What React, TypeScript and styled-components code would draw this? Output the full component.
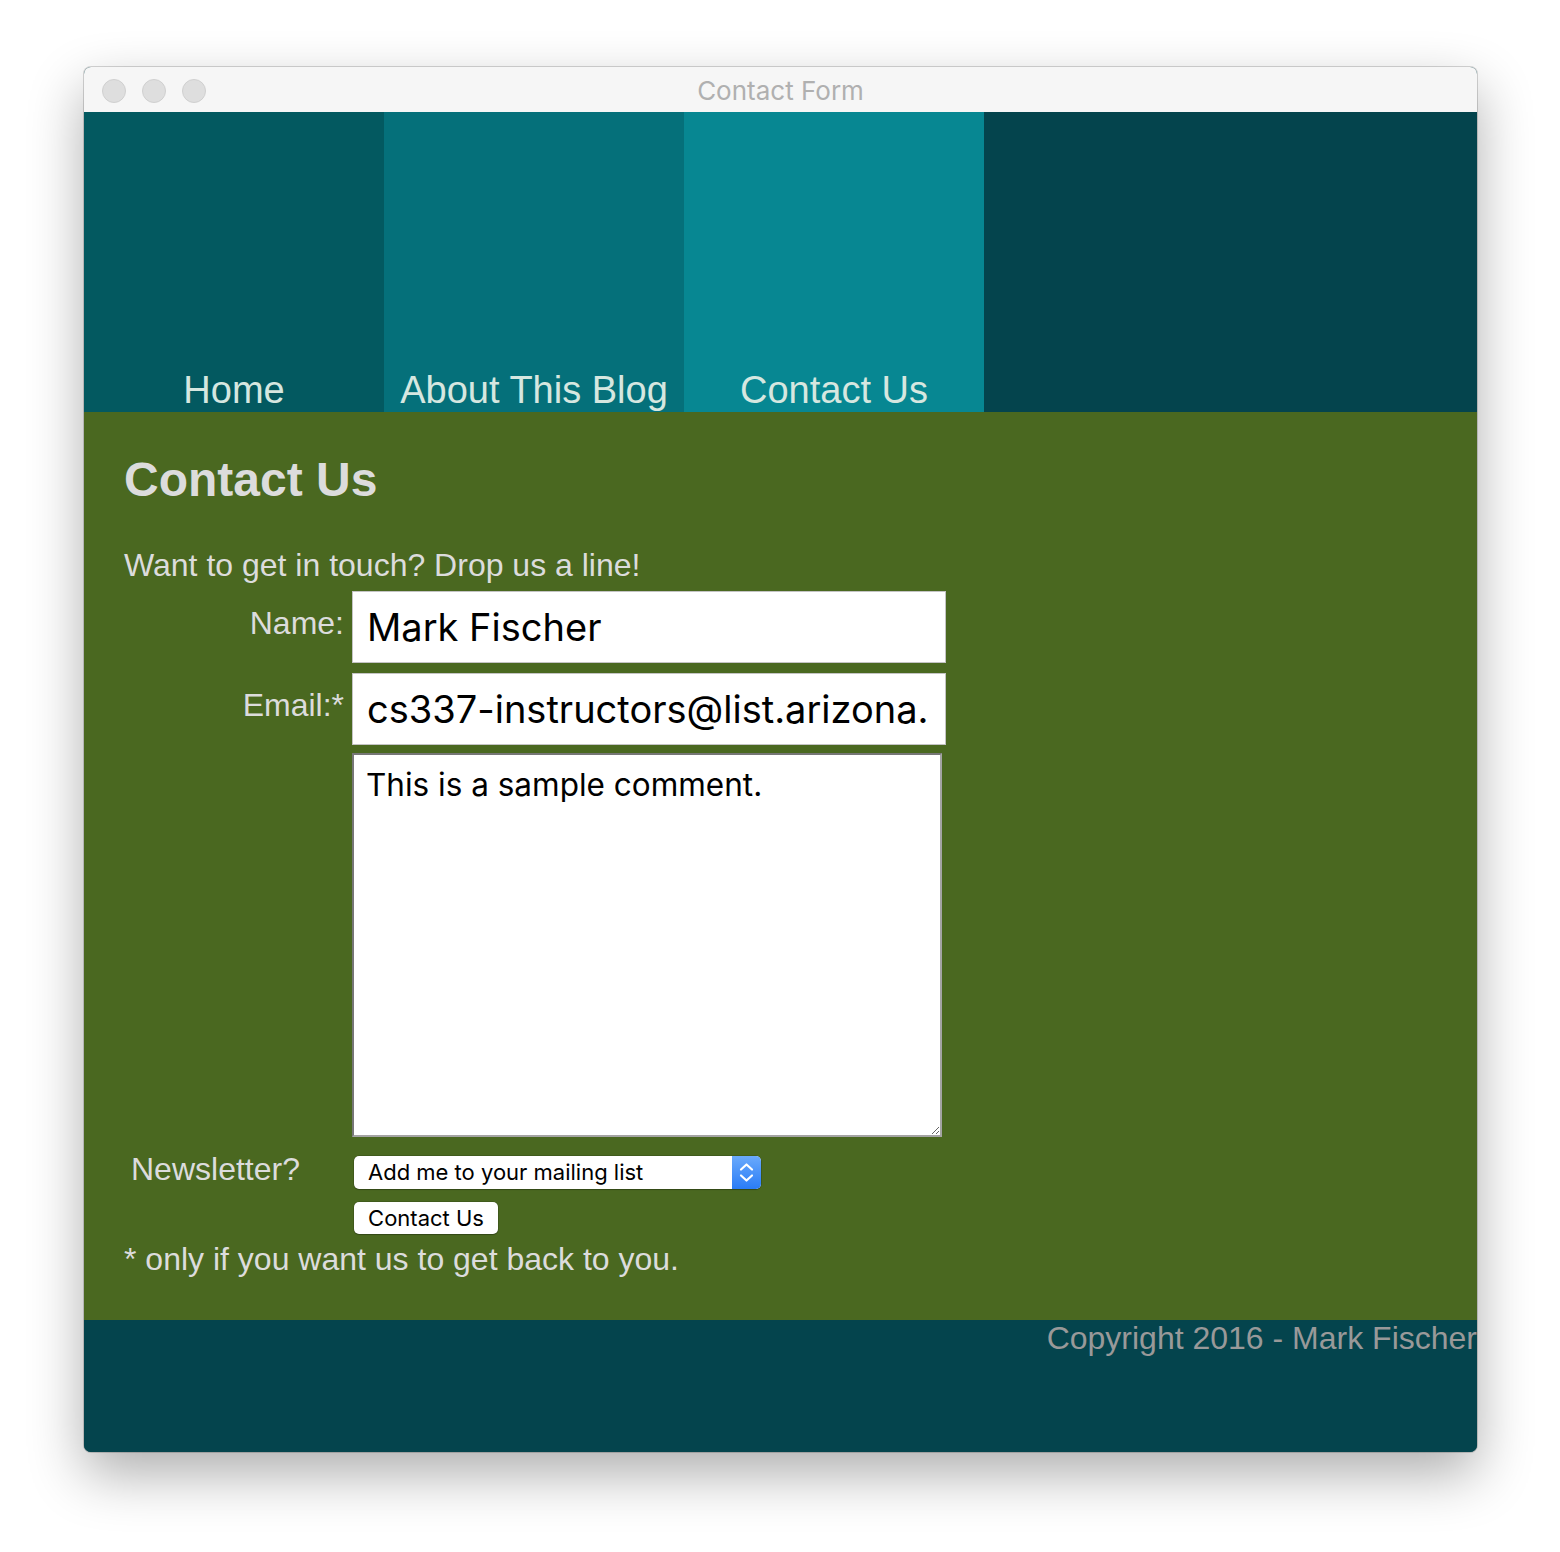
import React from "react";
import styled, { createGlobalStyle } from "styled-components";

const GlobalStyle = createGlobalStyle`
  html, body { margin: 0; padding: 0; background: #ffffff; }
  body { font-family: "Liberation Sans", Arial, sans-serif; }
  * { box-sizing: border-box; }
`;

const Page = styled.div`
  min-height: 1552px;
  padding: 67px 0 0 84px;
`;

const Window = styled.div`
  width: 1393px;
  border-radius: 7px;
  overflow: hidden;
  background: #04444d;
  box-shadow: 0 0 0 1px rgba(0, 0, 0, 0.16), 0 22px 55px rgba(0, 0, 0, 0.32);
  display: flex;
  flex-direction: column;
`;

const TitleBar = styled.div`
  height: 45px;
  padding-top: 2px;
  background: #f6f6f6;
  display: grid;
  grid-template-columns: 1fr auto 1fr;
  align-items: center;
`;

const Lights = styled.div`
  display: flex;
  gap: 16px;
  padding-left: 18px;
  margin-top: 1px;
`;

const Light = styled.span`
  width: 24px;
  height: 24px;
  border-radius: 50%;
  background: #dedede;
  border: 1px solid #d0d0d0;
`;

const Title = styled.div`
  font-family: Inter, "Noto Sans", sans-serif;
  font-size: 26px;
  color: #b0b0b0;
  white-space: nowrap;
`;

const Nav = styled.nav`
  height: 300px;
  display: flex;
  background: #04444d;
`;

const NavItem = styled.a<{ $bg: string }>`
  width: 300px;
  height: 300px;
  background: ${(p) => p.$bg};
  display: flex;
  align-items: flex-end;
  justify-content: center;
  font-size: 38px;
  color: #d6e7e0;
  text-decoration: none;
  white-space: nowrap;
`;

const Main = styled.main`
  height: 908px;
  background: #4a6820;
  padding: 40px 40px 0 40px;
  color: #dcdcdc;
`;

const Heading = styled.h1`
  margin: 0;
  font-size: 48px;
  font-weight: bold;
  line-height: normal;
`;

const Intro = styled.p`
  margin: 40px 0 0;
  font-size: 32px;
  line-height: normal;
`;

const Form = styled.form`
  margin-top: 7px;
  display: flex;
  flex-direction: column;
`;

const Row = styled.div<{ $mt: number; $align?: string }>`
  display: flex;
  align-items: ${(p) => p.$align || "flex-start"};
  margin-top: ${(p) => p.$mt}px;
`;

const Label = styled.label`
  width: 220px;
  margin-right: 8px;
  padding-top: 14px;
  text-align: right;
  font-size: 32px;
  white-space: nowrap;
`;

const SideLabel = styled.label`
  width: 228px;
  padding-left: 7px;
  font-size: 32px;
  white-space: nowrap;
`;

const Spacer = styled.div`
  width: 228px;
  flex: none;
`;

const TextInput = styled.input`
  width: 594px;
  height: 72px;
  border: 1px solid #c4c4c4;
  background: #ffffff;
  padding: 0 17px 0 14px;
  font-family: Inter, "Noto Sans", sans-serif;
  font-size: 38px;
  color: #000;
  outline: none;
`;

const TextArea = styled.textarea`
  width: 590px;
  height: 384px;
  border: 2px solid;
  border-color: #767676 #a4a4a4 #a4a4a4 #767676;
  background: #ffffff;
  padding: 10px 12px;
  font-family: Inter, "Noto Sans", sans-serif;
  font-size: 31.5px;
  color: #000;
  outline: none;
`;

const SelectBox = styled.div`
  display: inline-flex;
  width: 407px;
  height: 33px;
  margin-left: 2px;
  border-radius: 5px;
  background: #ffffff;
  box-shadow: 0 0 0 0.5px rgba(0, 0, 0, 0.25), 0 1px 1px rgba(0, 0, 0, 0.2);
  overflow: hidden;
`;

const Select = styled.select`
  flex: 1;
  appearance: none;
  -webkit-appearance: none;
  border: 0;
  background: transparent;
  padding: 0 0 0 14px;
  font-family: Inter, "Noto Sans", sans-serif;
  font-size: 22px;
  color: #000;
  outline: none;
`;

const Stepper = styled.span`
  width: 29px;
  flex: none;
  background: linear-gradient(#6aaafc, #2a7cf6);
  display: flex;
  align-items: center;
  justify-content: center;
`;

const Button = styled.button`
  width: 144px;
  height: 32px;
  margin-left: 2px;
  border: 0;
  border-radius: 5px;
  background: #ffffff;
  box-shadow: 0 0 0 0.5px rgba(0, 0, 0, 0.25), 0 1px 1px rgba(0, 0, 0, 0.2);
  font-family: Inter, "Noto Sans", sans-serif;
  font-size: 22px;
  color: #000;
  padding: 0;
`;

const Footnote = styled.p`
  margin: 7px 0 0;
  font-size: 32px;
  line-height: normal;
`;

const Footer = styled.footer`
  height: 132px;
  background: #04444d;
  color: #999999;
  font-size: 32px;
  text-align: right;
  white-space: nowrap;
  overflow: hidden;
`;

export default function App() {
  return (
    <Page>
      <GlobalStyle />
      <Window>
        <TitleBar>
          <Lights>
            <Light />
            <Light />
            <Light />
          </Lights>
          <Title>Contact Form</Title>
          <div />
        </TitleBar>
        <Nav>
          <NavItem $bg="#035960" href="#">Home</NavItem>
          <NavItem $bg="#05707a" href="#">About This Blog</NavItem>
          <NavItem $bg="#078792" href="#">Contact Us</NavItem>
        </Nav>
        <Main>
          <Heading>Contact Us</Heading>
          <Intro>Want to get in touch? Drop us a line!</Intro>
          <Form onSubmit={(e) => e.preventDefault()}>
            <Row $mt={0}>
              <Label>Name:</Label>
              <TextInput defaultValue="Mark Fischer" />
            </Row>
            <Row $mt={10}>
              <Label>Email:*</Label>
              <TextInput defaultValue="cs337-instructors@list.arizona.edu" />
            </Row>
            <Row $mt={8}>
              <Spacer />
              <TextArea defaultValue="This is a sample comment." />
            </Row>
            <Row $mt={14} $align="baseline">
              <SideLabel>Newsletter?</SideLabel>
              <SelectBox>
                <Select defaultValue="yes">
                  <option value="yes">Add me to your mailing list</option>
                  <option value="no">No thanks</option>
                </Select>
                <Stepper>
                  <svg width="29" height="33" viewBox="0 0 29 33" fill="none">
                    <path d="M9 13.5 L14.5 8.5 L20 13.5" stroke="#fff" strokeWidth="2.2" strokeLinecap="round" strokeLinejoin="round" />
                    <path d="M9 19.5 L14.5 24.5 L20 19.5" stroke="#fff" strokeWidth="2.2" strokeLinecap="round" strokeLinejoin="round" />
                  </svg>
                </Stepper>
              </SelectBox>
            </Row>
            <Row $mt={13}>
              <Spacer />
              <Button type="submit">Contact Us</Button>
            </Row>
          </Form>
          <Footnote>* only if you want us to get back to you.</Footnote>
        </Main>
        <Footer>Copyright 2016 - Mark Fischer</Footer>
      </Window>
    </Page>
  );
}
